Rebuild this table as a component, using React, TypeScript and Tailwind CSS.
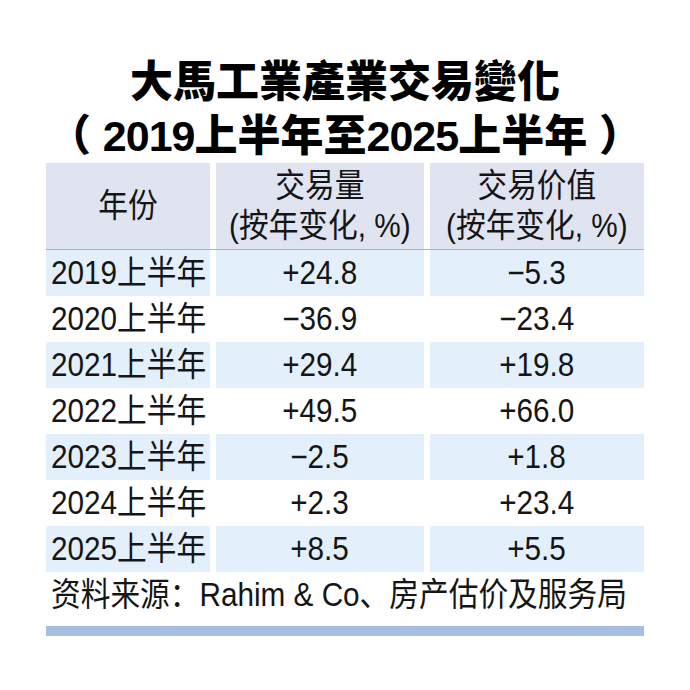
import clsx from "clsx";

const rows: [string, string, string][] = [
    ["2019上半年", "+24.8", "−5.3"],
    ["2020上半年", "−36.9", "−23.4"],
    ["2021上半年", "+29.4", "+19.8"],
    ["2022上半年", "+49.5", "+66.0"],
    ["2023上半年", "−2.5", "+1.8"],
    ["2024上半年", "+2.3", "+23.4"],
    ["2025上半年", "+8.5", "+5.5"],
];

const Num = ({ children }: { children: string }) => (
    <span className="tracking-[-1px]">{children}</span>
);

export default function App() {
    return (
        <div className="h-[690px] w-[690px] overflow-hidden bg-white font-[Liberation_Sans,Noto_Sans_CJK_SC,sans-serif] text-[#151515]">
            <div className="pt-[55px] text-center font-[Liberation_Sans,Noto_Sans_CJK_TC,sans-serif] text-[43px] leading-[54px] font-black text-black">
                <p>大馬工業產業交易變化</p>
                <p className="whitespace-nowrap">
                    （ <Num>2019</Num>上半年至<Num>2025</Num>上半年 ）
                </p>
            </div>

            <div className="mx-[46px]">
                {/* header */}
                <div className="grid h-[87px] grid-cols-[164px_208px_214px] gap-x-[6px] border-b border-[#aab3c4] bg-white">
                    <div className="flex items-center justify-center bg-[#dfe4f0]">
                        <span className="inline-block scale-x-90 text-[33px] leading-[40px]">
                            年份
                        </span>
                    </div>
                    <HeaderCell title="交易量" />
                    <HeaderCell title="交易价值" />
                </div>

                {/* body */}
                {rows.map(([year, volume, value], i) => (
                    <div
                        key={year}
                        className="grid h-[46px] grid-cols-[164px_208px_214px] gap-x-[6px]"
                    >
                        {[year, volume, value].map((cell, j) => (
                            <div
                                key={j}
                                className={clsx(
                                    "flex items-center",
                                    i % 2 === 0 && "bg-[#e3f0fb]",
                                    j === 0 ? "pl-[5px]" : "justify-center",
                                )}
                            >
                                <span
                                    className={clsx(
                                        "inline-block scale-x-90 text-[33px] leading-[40px] whitespace-nowrap",
                                        j === 0 && "origin-left",
                                    )}
                                >
                                    {cell}
                                </span>
                            </div>
                        ))}
                    </div>
                ))}

                <div className="flex h-[46px] items-center pl-[5px]">
                    <span className="inline-block origin-left scale-x-90 text-[33px] leading-[40px] whitespace-nowrap">
                        资料来源：Rahim &amp; Co、房产估价及服务局
                    </span>
                </div>
                <div className="mt-[8px] h-[10px] bg-[#a7bee3]" />
            </div>
        </div>
    );
}

const HeaderCell = ({ title }: { title: string }) => (
    <div className="flex items-center justify-center bg-[#dfe4f0]">
        <div className="inline-block scale-x-90 text-center text-[33px] leading-[40px] whitespace-nowrap">
            <p>{title}</p>
            <p>(按年变化, %)</p>
        </div>
    </div>
);
